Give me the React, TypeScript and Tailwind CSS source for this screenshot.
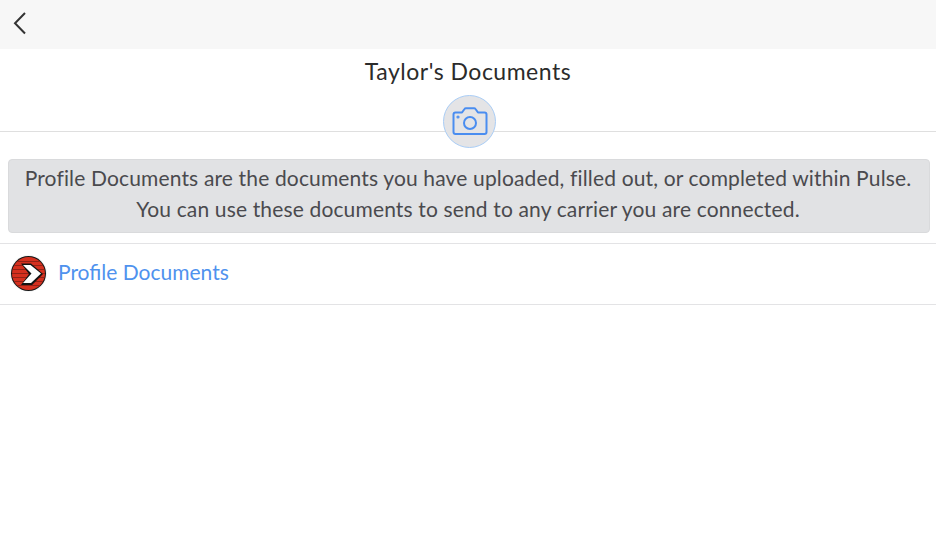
export default function App() {
  return (
    <div className="w-[936px] h-[554px] bg-white overflow-hidden font-['Lato',sans-serif]">
      <header className="h-[49px] bg-[#f7f7f7] flex items-center pl-[12px] pb-[4px]">
        <svg width="16" height="26" viewBox="0 0 16 26" fill="none" stroke="#333" strokeWidth="2">
          <path d="M13 3 L3 13.2 L13 23.5" />
        </svg>
      </header>
      <div className="h-[83px] border-b border-[#dfdfdf] flex flex-col items-center">
        <h1 className="h-[46px] shrink-0 pb-[1px] flex items-center text-[23px] tracking-[0.5px] text-[#2b2b2b] font-normal">Taylor's Documents</h1>
        <div className="w-[53px] h-[53px] shrink-0 ml-[3px] rounded-full bg-[#e4e4e6] border-[1.5px] border-[#a9cdf6] flex items-center justify-center relative">
          <svg width="36" height="30" viewBox="0 0 36 30" fill="none" stroke="#4a8df0" strokeWidth="2" strokeLinejoin="round">
            <path d="M3.5 5.5 H10 L12.5 2 Q13 1.2 14 1.2 H22 Q23 1.2 23.5 2 L26 5.5 H32.5 Q34.5 5.5 34.5 7.5 V25 Q34.5 27 32.5 27 H3.5 Q1.5 27 1.5 25 V7.5 Q1.5 5.5 3.5 5.5 Z" />
            <circle cx="18" cy="16" r="6" />
            <circle cx="6" cy="10" r="0.6" fill="#4a8df0" />
          </svg>
        </div>
      </div>
      <div className="ml-[8px] mr-[6px] mt-[27px] h-[74px] pb-[7px] pr-[2px] rounded-[4px] bg-[#e1e2e4] border border-[#d9dadc] flex flex-col items-center justify-center text-[21px] leading-[31px] tracking-[0.15px] text-[#4a4a4e]">
        <p>Profile Documents are the documents you have uploaded, filled out, or completed within Pulse.</p>
        <p>You can use these documents to send to any carrier you are connected.</p>
      </div>
      <div className="mt-[10px] h-[62px] border-y border-[#e3e3e5] flex items-center pl-[10px] gap-[11px]">
        <svg className="mb-[2px]" width="37" height="37" viewBox="0 0 37 37">
          <defs>
            <clipPath id="logoClip"><circle cx="18.5" cy="18.5" r="16.5" /></clipPath>
          </defs>
          <circle cx="18.5" cy="18.5" r="18.5" fill="#f4f4f4" />
          <circle cx="18.5" cy="18.5" r="17.5" fill="#141414" />
          <g clipPath="url(#logoClip)">
            <rect x="0" y="0" width="37" height="37" fill="#d5301f" />
            <path d="M0 6.5H37M0 10.5H37M0 14.5H37M0 18.5H37M0 22.5H37M0 26.5H37M0 30.5H37" stroke="#8a2015" strokeWidth="0.9" />
          </g>
          <path d="M11 8.5 H21 L33 19 L22 30 H11 L19 19 Z" fill="#141414" />
          <path d="M13 10 H20.5 L31 18.5 L21 28 H13 L21.5 18.5 Z" fill="#ffffff" />
        </svg>
        <span className="text-[21px] pb-[5px] text-[#4f92ee]">Profile Documents</span>
      </div>
    </div>
  );
}
